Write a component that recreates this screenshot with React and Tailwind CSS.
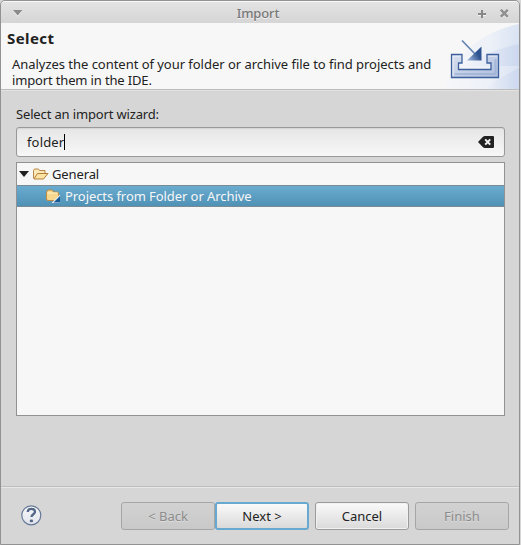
import React from 'react';

function TitleBar() {
  return (
    <header className="flex h-[22px] shrink-0 items-center rounded-t-[4px] border-t border-[#f8f8f8] bg-linear-to-b from-[#e3e3e3] to-[#d5d5d5]">
      <div className="flex w-[60px] pl-[12px]">
        <svg width="10" height="8" viewBox="0 0 10 8">
          <path d="M0 2h9.4L4.7 7.8z" fill="#f2f2f2" />
          <path d="M0 1h9.4L4.7 6.6z" fill="#8b8b8b" />
        </svg>
      </div>
      <h1 className="flex-1 pr-[4px] pt-[1px] text-center text-[13px] leading-[18px] font-medium tracking-[-0.15px] text-[#777] [text-shadow:0_1px_0_#f2f2f2]">Import</h1>
      <div className="flex w-[60px] items-center gap-[13px] pt-[2px] pl-[19px]">
        <svg width="9" height="9" viewBox="0 0 9 9" fill="none" strokeWidth="2">
          <path d="M0 6h8M4 2v7" stroke="#f2f2f2" />
          <path d="M0 5h8M4 1v8" stroke="#888" />
        </svg>
        <svg width="9" height="9" viewBox="0 0 9 9" fill="none" strokeWidth="2.5">
          <path d="M.8 1.8l7 7M7.8 1.8l-7 7" stroke="#f2f2f2" />
          <path d="M.8.8l7 7M7.8.8l-7 7" stroke="#909090" />
        </svg>
      </div>
    </header>
  );
}

function Banner() {
  return (
    <svg width="74" height="66" viewBox="0 0 74 66" className="shrink-0">
      <defs>
        <linearGradient id="sweep" x1="0" y1="0.5" x2="1" y2="0.5">
          <stop offset="0" stopColor="#f5f6f8" />
          <stop offset="0.6" stopColor="#edf1f8" />
          <stop offset="1" stopColor="#dae3f3" />
        </linearGradient>
        <linearGradient id="band" x1="0" x2="1">
          <stop offset="0" stopColor="#d5dff1" stopOpacity="0" />
          <stop offset="1" stopColor="#c7d4ee" stopOpacity="0.7" />
        </linearGradient>
        <linearGradient id="tray" x1="0" y1="0" x2="1" y2="1">
          <stop offset="0" stopColor="#d8e0ee" />
          <stop offset="1" stopColor="#aebfde" />
        </linearGradient>
        <linearGradient id="head" x1="0" y1="1" x2="1" y2="0.4">
          <stop offset="0" stopColor="#a9c0e2" />
          <stop offset="0.75" stopColor="#2f538f" />
        </linearGradient>
      </defs>
      <path d="M0 66C4 40 30 10 74 1v65z" fill="url(#sweep)" />
      <path d="M20 43Q44 27 74 21v22z" fill="url(#band)" />
      <path d="M40 66Q56 53 74 45v21z" fill="url(#band)" />
      <path d="M6.500 31.500H17v8.500h-3.500V46.500H46V40h-4v-8.500H53.500v23H6.500z" fill="url(#tray)" />
      <path d="M8 53V33h7.500M43.500 33h8.500" fill="none" stroke="#edf2fb" />
      <path d="M9.500 51h41M50.500 36v15" fill="none" stroke="#91a7d0" strokeWidth="2" opacity=".55" />
      <path d="M6.500 31.500H17v8.500h-3.500V46.500H46V40h-4v-8.500H53.500v23H6.500z" fill="none" stroke="#3d609c" strokeWidth="1.300" />
      <path d="M17 17.500L31 32" stroke="#6283b6" strokeWidth="1.700" />
      <path d="M36.500 23.500V37.500H22z" fill="url(#head)" />
    </svg>
  );
}

function ClearIcon() {
  return (
    <svg width="16" height="12" viewBox="0 0 16 12" className="shrink-0">
      <path d="M0 6L5 .8Q5.700 0 7 0h8q1 0 1 1v10q0 1-1 1H7q-1.300 0-2-.8z" fill="#222" />
      <path d="M7.200 3.400l5 5.200M12.200 3.400l-5 5.200" stroke="#f4f4f4" strokeWidth="2" />
    </svg>
  );
}

function OpenFolder() {
  return (
    <svg width="16" height="12" viewBox="0 0 16 12" className="shrink-0">
      <path d="M.5 10.500V2.500l1-1.500h4l1 1.500h5.500v3" fill="#fbe8b8" stroke="#b78748" />
      <path d="M1 10.800L4.500 5.500H15L10.500 11H1z" fill="#fbe3a6" stroke="#b67e35" strokeLinejoin="round" />
    </svg>
  );
}

function WizardFolder() {
  return (
    <svg width="16" height="14" viewBox="0 0 16 14" className="shrink-0">
      <path d="M.5 10V3L2 1h4l1.500 2h4l1 1v6.500l-1 1h-10z" fill="#f8d88e" stroke="#c28b3d" />
      <path d="M1.500 4h10" stroke="#fff2cc" />
      <path d="M5.500 14L14 5.500V14z" fill="#e8f1f7" />
      <path d="M7.500 13.500L14 7v6.500z" fill="#185a96" />
    </svg>
  );
}

function HelpIcon() {
  return (
    <svg width="21" height="21" viewBox="0 0 21 21" className="shrink-0">
      <defs>
        <linearGradient id="help" x1="0" y1="0" x2="0" y2="1">
          <stop offset="0" stopColor="#f8f8f8" />
          <stop offset="1" stopColor="#e0e4eb" />
        </linearGradient>
      </defs>
      <circle cx="10.300" cy="10.300" r="9.500" fill="url(#help)" stroke="#667998" strokeWidth="1.200" />
      <path d="M6.700 7C6.800 4.400 8.300 3.800 10.300 3.800s3.700 1 3.700 3c0 2.500-3.500 2.500-3.500 5.200" fill="none" stroke="#526687" strokeWidth="2.300" />
      <ellipse cx="10.400" cy="15.900" rx="1.700" ry="1.400" fill="#526687" />
    </svg>
  );
}

const buttonBase = 'flex h-[28px] w-[94px] items-center justify-center rounded-[3px] text-[13px] leading-[18px] whitespace-nowrap';
const enabled = 'border border-[#9b9b9b] bg-linear-to-b from-[#fafafa] to-[#dadada] text-[#222] shadow-[inset_0_0_0_1px_#f0f0f0]';
const focused = 'border-2 border-[#67a9d0] bg-linear-to-b from-[#fafafa] to-[#dadada] text-[#222]';
const disabled = 'border border-[#a5a5a5] bg-linear-to-b from-[#d2d2d2] to-[#c9c9c9] text-[#8b8b8b] [text-shadow:0_1px_0_#dedede]';

export default function App() {
  return (
    <div className="h-[545px] w-[521px] overflow-hidden bg-[#d6d6d6] font-['Noto_Sans',sans-serif] text-[13px] text-[#222]">
      <main className="flex h-[545px] w-[520px] flex-col overflow-hidden rounded-t-[5px] border border-[#929292] bg-[#d6d6d6]">
        <TitleBar />
        <section className="flex h-[67px] shrink-0 justify-between border-b border-[#bcbcbc] bg-[#f7f7f7]">
          <div className="pt-[6px] pl-[6px]">
            <h2 className="text-[15px] leading-[18px] font-bold tracking-[0.4px]">Select</h2>
            <div className="mt-[9px] ml-[5px] flex flex-col text-[13px] leading-[16px] whitespace-nowrap">
              <p className="tracking-[-0.035px]">Analyzes the content of your folder or archive file to find projects and</p>
              <p className="tracking-[-0.15px]">import them in the IDE.</p>
            </div>
          </div>
          <Banner />
        </section>
        <section className="flex flex-1 flex-col border-t border-[#e2e2e2] px-[15px] pt-[13px]">
          <label className="h-[23px] leading-[20px] tracking-[-0.15px]">Select an import wizard:</label>
          <div className="flex h-[30px] w-[489px] items-center rounded-[3px] border border-[#999] bg-linear-to-b from-[#e6e6e6] to-[#f7f7f7] pr-[10px] pl-[10px] shadow-[inset_0_1px_1px_#d5d5d5]">
            <span className="pt-[2px] tracking-[0.15px]">folder</span>
            <span className="h-[16px] w-px bg-black" />
            <span className="flex-1" />
            <ClearIcon />
          </div>
          <div className="mt-[5px] h-[254px] w-[489px] border border-[#929292] bg-[#f7f7f7]">
            <div className="flex h-[22px] items-center pl-[2px]">
              <svg width="10" height="6" viewBox="0 0 10 6" className="mr-[4px]"><path d="M0 0h10L5 6z" fill="#222" /></svg>
              <OpenFolder />
              <span className="ml-[3px] pt-[2px] tracking-[-0.12px]">General</span>
            </div>
            <div className="flex h-[22px] items-center border-y border-[#7a8b94] bg-linear-to-b from-[#6aabd0] to-[#5091b6] pl-[29px] text-[#f7f7f7]">
              <WizardFolder />
              <span className="ml-[3px] pt-[2px] tracking-[-0.07px]">Projects from Folder or Archive</span>
            </div>
          </div>
        </section>
        <footer className="flex h-[58px] shrink-0 border-t border-[#bebebe]">
          <div className="flex flex-1 border-t border-[#e8e8e8] pt-[14px] pl-[20px]">
            <div className="w-[100px] pt-[3px]"><HelpIcon /></div>
            <button className={`${buttonBase} ${disabled}`}>&lt; Back</button>
            <button className={`${buttonBase} ${focused}`}>Next &gt;</button>
            <button className={`ml-[6px] ${buttonBase} ${enabled}`}>Cancel</button>
            <button className={`ml-[6px] ${buttonBase} ${disabled}`}>Finish</button>
          </div>
        </footer>
      </main>
    </div>
  );
}
